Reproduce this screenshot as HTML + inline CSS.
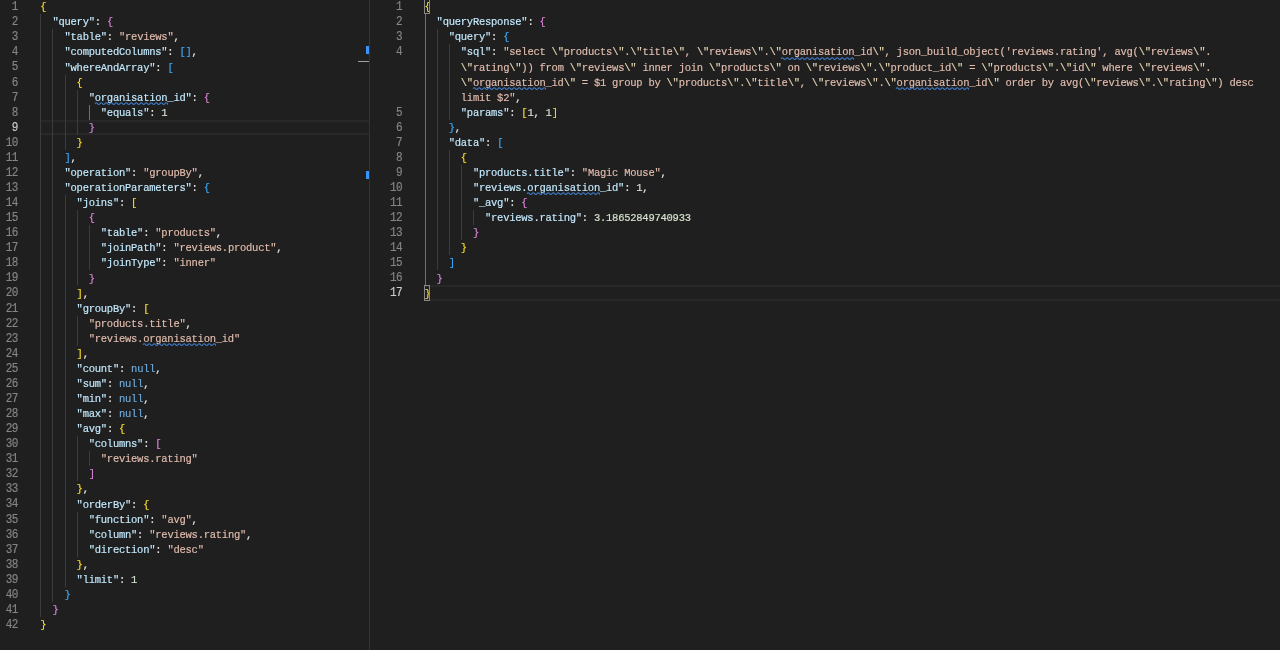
<!DOCTYPE html>
<html><head><meta charset="utf-8"><style>
html,body{margin:0;padding:0}
body{width:1280px;height:650px;background:#1f1f1f;overflow:hidden;position:relative;font-family:"Liberation Mono",monospace;font-size:10.5px;}
.pane{position:absolute;top:0;height:650px;overflow:hidden;will-change:transform;}
.row,.ln{position:absolute;white-space:pre;line-height:15.07px;height:15.07px;letter-spacing:-0.2510px;top:0;margin-top:1.1px;-webkit-text-stroke:0.15px currentColor;transform:scaleY(1.1);transform-origin:0 10.33px;}
.ln{color:#858585;text-align:right;font-size:11px;letter-spacing:-0.5511px;margin-right:0.5511px;margin-top:1.0px;transform:scaleY(1.12);transform-origin:0 10.46px;}
.ln.a{color:#cccccc;}
.row{color:#e0e0e0;}
.g{position:absolute;width:1px;background:#3c3c3c;}
.g.ga{background:#707070;}
.hl{position:absolute;box-sizing:border-box;border-top:2px solid #282828;border-bottom:2px solid #282828;}
.bm{position:absolute;box-sizing:border-box;border:1px solid #888888;background:transparent;}
.sq{position:absolute;overflow:visible;}
.div{position:absolute;left:369px;top:0;width:1px;height:650px;background:#333333;}
.om{position:absolute;}
</style></head><body>
<div class="pane" style="left:0;width:369px">
<div class="hl" style="left:40px;right:0;top:119.71px;height:15.07px"></div>
<div class="g" style="left:40px;top:14.22px;height:602.80px"></div>
<div class="g" style="left:52px;top:29.29px;height:572.66px"></div>
<div class="g" style="left:65px;top:74.50px;height:75.35px"></div>
<div class="g" style="left:65px;top:195.06px;height:391.82px"></div>
<div class="g" style="left:77px;top:89.57px;height:45.21px"></div>
<div class="g" style="left:77px;top:210.13px;height:75.35px"></div>
<div class="g" style="left:77px;top:315.62px;height:30.14px"></div>
<div class="g" style="left:77px;top:436.18px;height:45.21px"></div>
<div class="g" style="left:77px;top:511.53px;height:45.21px"></div>
<div class="g ga" style="left:89px;top:104.64px;height:15.07px"></div>
<div class="g" style="left:89px;top:225.20px;height:45.21px"></div>
<div class="g" style="left:89px;top:451.25px;height:15.07px"></div>
<div class="ln" style="right:350.70px;top:-0.85px">1</div>
<div class="row" style="left:40.30px;top:-0.85px"><span style="color:#ffdd26">{</span></div>
<div class="ln" style="right:350.70px;top:14.22px">2</div>
<div class="row" style="left:40.30px;top:14.22px">  <span style="color:#c4eafe">"query"</span><span style="color:#e6e6e6">:</span> <span style="color:#e085dc">{</span></div>
<div class="ln" style="right:350.70px;top:29.29px">3</div>
<div class="row" style="left:40.30px;top:29.29px">    <span style="color:#c4eafe">"table"</span><span style="color:#e6e6e6">:</span> <span style="color:#e2bdae">"reviews"</span><span style="color:#e6e6e6">,</span></div>
<div class="ln" style="right:350.70px;top:44.36px">4</div>
<div class="row" style="left:40.30px;top:44.36px">    <span style="color:#c4eafe">"computedColumns"</span><span style="color:#e6e6e6">:</span> <span style="color:#3aadff">[</span><span style="color:#3aadff">]</span><span style="color:#e6e6e6">,</span></div>
<div class="ln" style="right:350.70px;top:59.43px">5</div>
<div class="row" style="left:40.30px;top:59.43px">    <span style="color:#c4eafe">"whereAndArray"</span><span style="color:#e6e6e6">:</span> <span style="color:#3aadff">[</span></div>
<div class="ln" style="right:350.70px;top:74.50px">6</div>
<div class="row" style="left:40.30px;top:74.50px">      <span style="color:#ffdd26">{</span></div>
<div class="ln" style="right:350.70px;top:89.57px">7</div>
<div class="row" style="left:40.30px;top:89.57px">        <span style="color:#c4eafe">"organisation_id"</span><span style="color:#e6e6e6">:</span> <span style="color:#e085dc">{</span></div>
<div class="ln" style="right:350.70px;top:104.64px">8</div>
<div class="row" style="left:40.30px;top:104.64px">          <span style="color:#c4eafe">"equals"</span><span style="color:#e6e6e6">:</span> <span style="color:#d6e4cf">1</span></div>
<div class="ln a" style="right:350.70px;top:119.71px">9</div>
<div class="row" style="left:40.30px;top:119.71px">        <span style="color:#e085dc">}</span></div>
<div class="ln" style="right:350.70px;top:134.78px">10</div>
<div class="row" style="left:40.30px;top:134.78px">      <span style="color:#ffdd26">}</span></div>
<div class="ln" style="right:350.70px;top:149.85px">11</div>
<div class="row" style="left:40.30px;top:149.85px">    <span style="color:#3aadff">]</span><span style="color:#e6e6e6">,</span></div>
<div class="ln" style="right:350.70px;top:164.92px">12</div>
<div class="row" style="left:40.30px;top:164.92px">    <span style="color:#c4eafe">"operation"</span><span style="color:#e6e6e6">:</span> <span style="color:#e2bdae">"groupBy"</span><span style="color:#e6e6e6">,</span></div>
<div class="ln" style="right:350.70px;top:179.99px">13</div>
<div class="row" style="left:40.30px;top:179.99px">    <span style="color:#c4eafe">"operationParameters"</span><span style="color:#e6e6e6">:</span> <span style="color:#3aadff">{</span></div>
<div class="ln" style="right:350.70px;top:195.06px">14</div>
<div class="row" style="left:40.30px;top:195.06px">      <span style="color:#c4eafe">"joins"</span><span style="color:#e6e6e6">:</span> <span style="color:#ffdd26">[</span></div>
<div class="ln" style="right:350.70px;top:210.13px">15</div>
<div class="row" style="left:40.30px;top:210.13px">        <span style="color:#e085dc">{</span></div>
<div class="ln" style="right:350.70px;top:225.20px">16</div>
<div class="row" style="left:40.30px;top:225.20px">          <span style="color:#c4eafe">"table"</span><span style="color:#e6e6e6">:</span> <span style="color:#e2bdae">"products"</span><span style="color:#e6e6e6">,</span></div>
<div class="ln" style="right:350.70px;top:240.27px">17</div>
<div class="row" style="left:40.30px;top:240.27px">          <span style="color:#c4eafe">"joinPath"</span><span style="color:#e6e6e6">:</span> <span style="color:#e2bdae">"reviews.product"</span><span style="color:#e6e6e6">,</span></div>
<div class="ln" style="right:350.70px;top:255.34px">18</div>
<div class="row" style="left:40.30px;top:255.34px">          <span style="color:#c4eafe">"joinType"</span><span style="color:#e6e6e6">:</span> <span style="color:#e2bdae">"inner"</span></div>
<div class="ln" style="right:350.70px;top:270.41px">19</div>
<div class="row" style="left:40.30px;top:270.41px">        <span style="color:#e085dc">}</span></div>
<div class="ln" style="right:350.70px;top:285.48px">20</div>
<div class="row" style="left:40.30px;top:285.48px">      <span style="color:#ffdd26">]</span><span style="color:#e6e6e6">,</span></div>
<div class="ln" style="right:350.70px;top:300.55px">21</div>
<div class="row" style="left:40.30px;top:300.55px">      <span style="color:#c4eafe">"groupBy"</span><span style="color:#e6e6e6">:</span> <span style="color:#ffdd26">[</span></div>
<div class="ln" style="right:350.70px;top:315.62px">22</div>
<div class="row" style="left:40.30px;top:315.62px">        <span style="color:#e2bdae">"products.title"</span><span style="color:#e6e6e6">,</span></div>
<div class="ln" style="right:350.70px;top:330.69px">23</div>
<div class="row" style="left:40.30px;top:330.69px">        <span style="color:#e2bdae">"reviews.organisation_id"</span></div>
<div class="ln" style="right:350.70px;top:345.76px">24</div>
<div class="row" style="left:40.30px;top:345.76px">      <span style="color:#ffdd26">]</span><span style="color:#e6e6e6">,</span></div>
<div class="ln" style="right:350.70px;top:360.83px">25</div>
<div class="row" style="left:40.30px;top:360.83px">      <span style="color:#c4eafe">"count"</span><span style="color:#e6e6e6">:</span> <span style="color:#6fabdc">null</span><span style="color:#e6e6e6">,</span></div>
<div class="ln" style="right:350.70px;top:375.90px">26</div>
<div class="row" style="left:40.30px;top:375.90px">      <span style="color:#c4eafe">"sum"</span><span style="color:#e6e6e6">:</span> <span style="color:#6fabdc">null</span><span style="color:#e6e6e6">,</span></div>
<div class="ln" style="right:350.70px;top:390.97px">27</div>
<div class="row" style="left:40.30px;top:390.97px">      <span style="color:#c4eafe">"min"</span><span style="color:#e6e6e6">:</span> <span style="color:#6fabdc">null</span><span style="color:#e6e6e6">,</span></div>
<div class="ln" style="right:350.70px;top:406.04px">28</div>
<div class="row" style="left:40.30px;top:406.04px">      <span style="color:#c4eafe">"max"</span><span style="color:#e6e6e6">:</span> <span style="color:#6fabdc">null</span><span style="color:#e6e6e6">,</span></div>
<div class="ln" style="right:350.70px;top:421.11px">29</div>
<div class="row" style="left:40.30px;top:421.11px">      <span style="color:#c4eafe">"avg"</span><span style="color:#e6e6e6">:</span> <span style="color:#ffdd26">{</span></div>
<div class="ln" style="right:350.70px;top:436.18px">30</div>
<div class="row" style="left:40.30px;top:436.18px">        <span style="color:#c4eafe">"columns"</span><span style="color:#e6e6e6">:</span> <span style="color:#e085dc">[</span></div>
<div class="ln" style="right:350.70px;top:451.25px">31</div>
<div class="row" style="left:40.30px;top:451.25px">          <span style="color:#e2bdae">"reviews.rating"</span></div>
<div class="ln" style="right:350.70px;top:466.32px">32</div>
<div class="row" style="left:40.30px;top:466.32px">        <span style="color:#e085dc">]</span></div>
<div class="ln" style="right:350.70px;top:481.39px">33</div>
<div class="row" style="left:40.30px;top:481.39px">      <span style="color:#ffdd26">}</span><span style="color:#e6e6e6">,</span></div>
<div class="ln" style="right:350.70px;top:496.46px">34</div>
<div class="row" style="left:40.30px;top:496.46px">      <span style="color:#c4eafe">"orderBy"</span><span style="color:#e6e6e6">:</span> <span style="color:#ffdd26">{</span></div>
<div class="ln" style="right:350.70px;top:511.53px">35</div>
<div class="row" style="left:40.30px;top:511.53px">        <span style="color:#c4eafe">"function"</span><span style="color:#e6e6e6">:</span> <span style="color:#e2bdae">"avg"</span><span style="color:#e6e6e6">,</span></div>
<div class="ln" style="right:350.70px;top:526.60px">36</div>
<div class="row" style="left:40.30px;top:526.60px">        <span style="color:#c4eafe">"column"</span><span style="color:#e6e6e6">:</span> <span style="color:#e2bdae">"reviews.rating"</span><span style="color:#e6e6e6">,</span></div>
<div class="ln" style="right:350.70px;top:541.67px">37</div>
<div class="row" style="left:40.30px;top:541.67px">        <span style="color:#c4eafe">"direction"</span><span style="color:#e6e6e6">:</span> <span style="color:#e2bdae">"desc"</span></div>
<div class="ln" style="right:350.70px;top:556.74px">38</div>
<div class="row" style="left:40.30px;top:556.74px">      <span style="color:#ffdd26">}</span><span style="color:#e6e6e6">,</span></div>
<div class="ln" style="right:350.70px;top:571.81px">39</div>
<div class="row" style="left:40.30px;top:571.81px">      <span style="color:#c4eafe">"limit"</span><span style="color:#e6e6e6">:</span> <span style="color:#d6e4cf">1</span></div>
<div class="ln" style="right:350.70px;top:586.88px">40</div>
<div class="row" style="left:40.30px;top:586.88px">    <span style="color:#3aadff">}</span></div>
<div class="ln" style="right:350.70px;top:601.95px">41</div>
<div class="row" style="left:40.30px;top:601.95px">  <span style="color:#e085dc">}</span></div>
<div class="ln" style="right:350.70px;top:617.02px">42</div>
<div class="row" style="left:40.30px;top:617.02px"><span style="color:#ffdd26">}</span></div>
<svg class="sq" style="left:94.75px;top:101.84px" width="72.60" height="3.2"><path d="M0 1.60 Q1.25 -0.20 2.50 1.60 Q3.75 3.40 5.00 1.60 Q6.25 -0.20 7.50 1.60 Q8.75 3.40 10.00 1.60 Q11.25 -0.20 12.50 1.60 Q13.75 3.40 15.00 1.60 Q16.25 -0.20 17.50 1.60 Q18.75 3.40 20.00 1.60 Q21.25 -0.20 22.50 1.60 Q23.75 3.40 25.00 1.60 Q26.25 -0.20 27.50 1.60 Q28.75 3.40 30.00 1.60 Q31.25 -0.20 32.50 1.60 Q33.75 3.40 35.00 1.60 Q36.25 -0.20 37.50 1.60 Q38.75 3.40 40.00 1.60 Q41.25 -0.20 42.50 1.60 Q43.75 3.40 45.00 1.60 Q46.25 -0.20 47.50 1.60 Q48.75 3.40 50.00 1.60 Q51.25 -0.20 52.50 1.60 Q53.75 3.40 55.00 1.60 Q56.25 -0.20 57.50 1.60 Q58.75 3.40 60.00 1.60 Q61.25 -0.20 62.50 1.60 Q63.75 3.40 65.00 1.60 Q66.25 -0.20 67.50 1.60 Q68.75 3.40 70.00 1.60 Q71.25 -0.20 72.50 1.60 Q72.55 3.40 72.60 1.60" fill="none" stroke="#3f7cc8" stroke-width="1.1"/></svg>
<svg class="sq" style="left:143.15px;top:342.96px" width="72.60" height="3.2"><path d="M0 1.60 Q1.25 -0.20 2.50 1.60 Q3.75 3.40 5.00 1.60 Q6.25 -0.20 7.50 1.60 Q8.75 3.40 10.00 1.60 Q11.25 -0.20 12.50 1.60 Q13.75 3.40 15.00 1.60 Q16.25 -0.20 17.50 1.60 Q18.75 3.40 20.00 1.60 Q21.25 -0.20 22.50 1.60 Q23.75 3.40 25.00 1.60 Q26.25 -0.20 27.50 1.60 Q28.75 3.40 30.00 1.60 Q31.25 -0.20 32.50 1.60 Q33.75 3.40 35.00 1.60 Q36.25 -0.20 37.50 1.60 Q38.75 3.40 40.00 1.60 Q41.25 -0.20 42.50 1.60 Q43.75 3.40 45.00 1.60 Q46.25 -0.20 47.50 1.60 Q48.75 3.40 50.00 1.60 Q51.25 -0.20 52.50 1.60 Q53.75 3.40 55.00 1.60 Q56.25 -0.20 57.50 1.60 Q58.75 3.40 60.00 1.60 Q61.25 -0.20 62.50 1.60 Q63.75 3.40 65.00 1.60 Q66.25 -0.20 67.50 1.60 Q68.75 3.40 70.00 1.60 Q71.25 -0.20 72.50 1.60 Q72.55 3.40 72.60 1.60" fill="none" stroke="#3f7cc8" stroke-width="1.1"/></svg>
<div class="om" style="left:365.5px;top:46px;width:3.5px;height:7.5px;background:#3794ff"></div>
<div class="om" style="left:365.5px;top:171px;width:3.5px;height:7.5px;background:#3794ff"></div>
<div class="om" style="left:358px;top:61px;width:11px;height:1px;background:#a0a0a0"></div>
</div>
<div class="div"></div>
<div class="pane" style="left:370px;width:910px">
<div class="hl" style="left:54px;right:0;top:285.48px;height:15.07px"></div>
<div class="g ga" style="left:55px;top:14.22px;height:271.26px"></div>
<div class="g" style="left:67px;top:29.29px;height:241.12px"></div>
<div class="g" style="left:79px;top:44.36px;height:75.35px"></div>
<div class="g" style="left:79px;top:149.85px;height:105.49px"></div>
<div class="g" style="left:91px;top:164.92px;height:75.35px"></div>
<div class="g" style="left:103px;top:210.13px;height:15.07px"></div>
<div class="ln" style="right:877.40px;top:-0.85px">1</div>
<div class="row" style="left:54.50px;top:-0.85px"><span style="color:#ffdd26">{</span></div>
<div class="ln" style="right:877.40px;top:14.22px">2</div>
<div class="row" style="left:54.50px;top:14.22px">  <span style="color:#c4eafe">"queryResponse"</span><span style="color:#e6e6e6">:</span> <span style="color:#e085dc">{</span></div>
<div class="ln" style="right:877.40px;top:29.29px">3</div>
<div class="row" style="left:54.50px;top:29.29px">    <span style="color:#c4eafe">"query"</span><span style="color:#e6e6e6">:</span> <span style="color:#3aadff">{</span></div>
<div class="ln" style="right:877.40px;top:44.36px">4</div>
<div class="row" style="left:54.50px;top:44.36px">      <span style="color:#c4eafe">"sql"</span><span style="color:#e6e6e6">:</span> <span style="color:#e2bdae">"select </span><span style="color:#e7d6b1">\"</span><span style="color:#e2bdae">products</span><span style="color:#e7d6b1">\"</span><span style="color:#e2bdae">.</span><span style="color:#e7d6b1">\"</span><span style="color:#e2bdae">title</span><span style="color:#e7d6b1">\"</span><span style="color:#e2bdae">, </span><span style="color:#e7d6b1">\"</span><span style="color:#e2bdae">reviews</span><span style="color:#e7d6b1">\"</span><span style="color:#e2bdae">.</span><span style="color:#e7d6b1">\"</span><span style="color:#e2bdae">organisation_id</span><span style="color:#e7d6b1">\"</span><span style="color:#e2bdae">, json_build_object('reviews.rating', avg(</span><span style="color:#e7d6b1">\"</span><span style="color:#e2bdae">reviews</span><span style="color:#e7d6b1">\"</span><span style="color:#e2bdae">.</span></div>
<div class="row" style="left:54.50px;top:59.43px">      <span style="color:#e7d6b1">\"</span><span style="color:#e2bdae">rating</span><span style="color:#e7d6b1">\"</span><span style="color:#e2bdae">)) from </span><span style="color:#e7d6b1">\"</span><span style="color:#e2bdae">reviews</span><span style="color:#e7d6b1">\"</span><span style="color:#e2bdae"> inner join </span><span style="color:#e7d6b1">\"</span><span style="color:#e2bdae">products</span><span style="color:#e7d6b1">\"</span><span style="color:#e2bdae"> on </span><span style="color:#e7d6b1">\"</span><span style="color:#e2bdae">reviews</span><span style="color:#e7d6b1">\"</span><span style="color:#e2bdae">.</span><span style="color:#e7d6b1">\"</span><span style="color:#e2bdae">product_id</span><span style="color:#e7d6b1">\"</span><span style="color:#e2bdae"> = </span><span style="color:#e7d6b1">\"</span><span style="color:#e2bdae">products</span><span style="color:#e7d6b1">\"</span><span style="color:#e2bdae">.</span><span style="color:#e7d6b1">\"</span><span style="color:#e2bdae">id</span><span style="color:#e7d6b1">\"</span><span style="color:#e2bdae"> where </span><span style="color:#e7d6b1">\"</span><span style="color:#e2bdae">reviews</span><span style="color:#e7d6b1">\"</span><span style="color:#e2bdae">.</span></div>
<div class="row" style="left:54.50px;top:74.50px">      <span style="color:#e7d6b1">\"</span><span style="color:#e2bdae">organisation_id</span><span style="color:#e7d6b1">\"</span><span style="color:#e2bdae"> = $1 group by </span><span style="color:#e7d6b1">\"</span><span style="color:#e2bdae">products</span><span style="color:#e7d6b1">\"</span><span style="color:#e2bdae">.</span><span style="color:#e7d6b1">\"</span><span style="color:#e2bdae">title</span><span style="color:#e7d6b1">\"</span><span style="color:#e2bdae">, </span><span style="color:#e7d6b1">\"</span><span style="color:#e2bdae">reviews</span><span style="color:#e7d6b1">\"</span><span style="color:#e2bdae">.</span><span style="color:#e7d6b1">\"</span><span style="color:#e2bdae">organisation_id</span><span style="color:#e7d6b1">\"</span><span style="color:#e2bdae"> order by avg(</span><span style="color:#e7d6b1">\"</span><span style="color:#e2bdae">reviews</span><span style="color:#e7d6b1">\"</span><span style="color:#e2bdae">.</span><span style="color:#e7d6b1">\"</span><span style="color:#e2bdae">rating</span><span style="color:#e7d6b1">\"</span><span style="color:#e2bdae">) desc </span></div>
<div class="row" style="left:54.50px;top:89.57px">      <span style="color:#e2bdae">limit $2"</span><span style="color:#e6e6e6">,</span></div>
<div class="ln" style="right:877.40px;top:104.64px">5</div>
<div class="row" style="left:54.50px;top:104.64px">      <span style="color:#c4eafe">"params"</span><span style="color:#e6e6e6">:</span> <span style="color:#ffdd26">[</span><span style="color:#d6e4cf">1</span><span style="color:#e6e6e6">,</span> <span style="color:#d6e4cf">1</span><span style="color:#ffdd26">]</span></div>
<div class="ln" style="right:877.40px;top:119.71px">6</div>
<div class="row" style="left:54.50px;top:119.71px">    <span style="color:#3aadff">}</span><span style="color:#e6e6e6">,</span></div>
<div class="ln" style="right:877.40px;top:134.78px">7</div>
<div class="row" style="left:54.50px;top:134.78px">    <span style="color:#c4eafe">"data"</span><span style="color:#e6e6e6">:</span> <span style="color:#3aadff">[</span></div>
<div class="ln" style="right:877.40px;top:149.85px">8</div>
<div class="row" style="left:54.50px;top:149.85px">      <span style="color:#ffdd26">{</span></div>
<div class="ln" style="right:877.40px;top:164.92px">9</div>
<div class="row" style="left:54.50px;top:164.92px">        <span style="color:#c4eafe">"products.title"</span><span style="color:#e6e6e6">:</span> <span style="color:#e2bdae">"Magic Mouse"</span><span style="color:#e6e6e6">,</span></div>
<div class="ln" style="right:877.40px;top:179.99px">10</div>
<div class="row" style="left:54.50px;top:179.99px">        <span style="color:#c4eafe">"reviews.organisation_id"</span><span style="color:#e6e6e6">:</span> <span style="color:#d6e4cf">1</span><span style="color:#e6e6e6">,</span></div>
<div class="ln" style="right:877.40px;top:195.06px">11</div>
<div class="row" style="left:54.50px;top:195.06px">        <span style="color:#c4eafe">"_avg"</span><span style="color:#e6e6e6">:</span> <span style="color:#e085dc">{</span></div>
<div class="ln" style="right:877.40px;top:210.13px">12</div>
<div class="row" style="left:54.50px;top:210.13px">          <span style="color:#c4eafe">"reviews.rating"</span><span style="color:#e6e6e6">:</span> <span style="color:#d6e4cf">3.18652849740933</span></div>
<div class="ln" style="right:877.40px;top:225.20px">13</div>
<div class="row" style="left:54.50px;top:225.20px">        <span style="color:#e085dc">}</span></div>
<div class="ln" style="right:877.40px;top:240.27px">14</div>
<div class="row" style="left:54.50px;top:240.27px">      <span style="color:#ffdd26">}</span></div>
<div class="ln" style="right:877.40px;top:255.34px">15</div>
<div class="row" style="left:54.50px;top:255.34px">    <span style="color:#3aadff">]</span></div>
<div class="ln" style="right:877.40px;top:270.41px">16</div>
<div class="row" style="left:54.50px;top:270.41px">  <span style="color:#e085dc">}</span></div>
<div class="ln a" style="right:877.40px;top:285.48px">17</div>
<div class="row" style="left:54.50px;top:285.48px"><span style="color:#ffdd26">}</span></div>
<svg class="sq" style="left:411.45px;top:56.63px" width="72.60" height="3.2"><path d="M0 1.60 Q1.25 -0.20 2.50 1.60 Q3.75 3.40 5.00 1.60 Q6.25 -0.20 7.50 1.60 Q8.75 3.40 10.00 1.60 Q11.25 -0.20 12.50 1.60 Q13.75 3.40 15.00 1.60 Q16.25 -0.20 17.50 1.60 Q18.75 3.40 20.00 1.60 Q21.25 -0.20 22.50 1.60 Q23.75 3.40 25.00 1.60 Q26.25 -0.20 27.50 1.60 Q28.75 3.40 30.00 1.60 Q31.25 -0.20 32.50 1.60 Q33.75 3.40 35.00 1.60 Q36.25 -0.20 37.50 1.60 Q38.75 3.40 40.00 1.60 Q41.25 -0.20 42.50 1.60 Q43.75 3.40 45.00 1.60 Q46.25 -0.20 47.50 1.60 Q48.75 3.40 50.00 1.60 Q51.25 -0.20 52.50 1.60 Q53.75 3.40 55.00 1.60 Q56.25 -0.20 57.50 1.60 Q58.75 3.40 60.00 1.60 Q61.25 -0.20 62.50 1.60 Q63.75 3.40 65.00 1.60 Q66.25 -0.20 67.50 1.60 Q68.75 3.40 70.00 1.60 Q71.25 -0.20 72.50 1.60 Q72.55 3.40 72.60 1.60" fill="none" stroke="#3f7cc8" stroke-width="1.1"/></svg>
<svg class="sq" style="left:102.90px;top:86.77px" width="72.60" height="3.2"><path d="M0 1.60 Q1.25 -0.20 2.50 1.60 Q3.75 3.40 5.00 1.60 Q6.25 -0.20 7.50 1.60 Q8.75 3.40 10.00 1.60 Q11.25 -0.20 12.50 1.60 Q13.75 3.40 15.00 1.60 Q16.25 -0.20 17.50 1.60 Q18.75 3.40 20.00 1.60 Q21.25 -0.20 22.50 1.60 Q23.75 3.40 25.00 1.60 Q26.25 -0.20 27.50 1.60 Q28.75 3.40 30.00 1.60 Q31.25 -0.20 32.50 1.60 Q33.75 3.40 35.00 1.60 Q36.25 -0.20 37.50 1.60 Q38.75 3.40 40.00 1.60 Q41.25 -0.20 42.50 1.60 Q43.75 3.40 45.00 1.60 Q46.25 -0.20 47.50 1.60 Q48.75 3.40 50.00 1.60 Q51.25 -0.20 52.50 1.60 Q53.75 3.40 55.00 1.60 Q56.25 -0.20 57.50 1.60 Q58.75 3.40 60.00 1.60 Q61.25 -0.20 62.50 1.60 Q63.75 3.40 65.00 1.60 Q66.25 -0.20 67.50 1.60 Q68.75 3.40 70.00 1.60 Q71.25 -0.20 72.50 1.60 Q72.55 3.40 72.60 1.60" fill="none" stroke="#3f7cc8" stroke-width="1.1"/></svg>
<svg class="sq" style="left:526.40px;top:86.77px" width="72.60" height="3.2"><path d="M0 1.60 Q1.25 -0.20 2.50 1.60 Q3.75 3.40 5.00 1.60 Q6.25 -0.20 7.50 1.60 Q8.75 3.40 10.00 1.60 Q11.25 -0.20 12.50 1.60 Q13.75 3.40 15.00 1.60 Q16.25 -0.20 17.50 1.60 Q18.75 3.40 20.00 1.60 Q21.25 -0.20 22.50 1.60 Q23.75 3.40 25.00 1.60 Q26.25 -0.20 27.50 1.60 Q28.75 3.40 30.00 1.60 Q31.25 -0.20 32.50 1.60 Q33.75 3.40 35.00 1.60 Q36.25 -0.20 37.50 1.60 Q38.75 3.40 40.00 1.60 Q41.25 -0.20 42.50 1.60 Q43.75 3.40 45.00 1.60 Q46.25 -0.20 47.50 1.60 Q48.75 3.40 50.00 1.60 Q51.25 -0.20 52.50 1.60 Q53.75 3.40 55.00 1.60 Q56.25 -0.20 57.50 1.60 Q58.75 3.40 60.00 1.60 Q61.25 -0.20 62.50 1.60 Q63.75 3.40 65.00 1.60 Q66.25 -0.20 67.50 1.60 Q68.75 3.40 70.00 1.60 Q71.25 -0.20 72.50 1.60 Q72.55 3.40 72.60 1.60" fill="none" stroke="#3f7cc8" stroke-width="1.1"/></svg>
<svg class="sq" style="left:157.35px;top:192.26px" width="72.60" height="3.2"><path d="M0 1.60 Q1.25 -0.20 2.50 1.60 Q3.75 3.40 5.00 1.60 Q6.25 -0.20 7.50 1.60 Q8.75 3.40 10.00 1.60 Q11.25 -0.20 12.50 1.60 Q13.75 3.40 15.00 1.60 Q16.25 -0.20 17.50 1.60 Q18.75 3.40 20.00 1.60 Q21.25 -0.20 22.50 1.60 Q23.75 3.40 25.00 1.60 Q26.25 -0.20 27.50 1.60 Q28.75 3.40 30.00 1.60 Q31.25 -0.20 32.50 1.60 Q33.75 3.40 35.00 1.60 Q36.25 -0.20 37.50 1.60 Q38.75 3.40 40.00 1.60 Q41.25 -0.20 42.50 1.60 Q43.75 3.40 45.00 1.60 Q46.25 -0.20 47.50 1.60 Q48.75 3.40 50.00 1.60 Q51.25 -0.20 52.50 1.60 Q53.75 3.40 55.00 1.60 Q56.25 -0.20 57.50 1.60 Q58.75 3.40 60.00 1.60 Q61.25 -0.20 62.50 1.60 Q63.75 3.40 65.00 1.60 Q66.25 -0.20 67.50 1.60 Q68.75 3.40 70.00 1.60 Q71.25 -0.20 72.50 1.60 Q72.55 3.40 72.60 1.60" fill="none" stroke="#3f7cc8" stroke-width="1.1"/></svg>
<div class="bm" style="left:54.10px;top:-0.85px;width:6.05px;height:15.07px"></div>
<div class="bm" style="left:54.10px;top:285.48px;width:6.05px;height:15.07px"></div>
</div>
</body></html>
